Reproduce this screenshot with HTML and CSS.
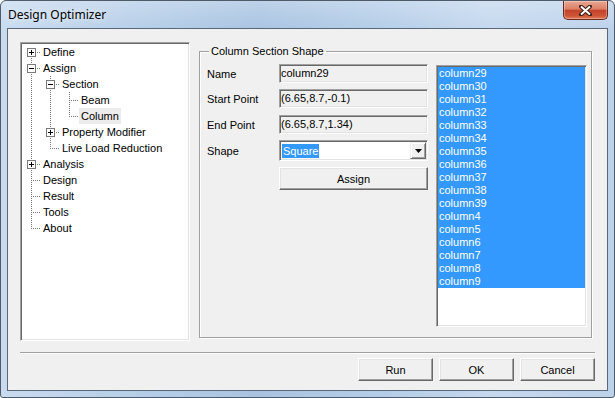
FILE: index.html
```html
<!DOCTYPE html>
<html lang="en">
  <head>
    <meta charset="UTF-8" />
    <title>Design Optimizer</title>
    <link rel="stylesheet" href="styles.css">
  </head>
  <body>
    <div class="window">
      <!-- Title bar -->
      <div class="titlebar">
        <span class="title">Design Optimizer</span>
        <button class="close" title="Close">
          <svg width="13" height="11" viewBox="0 0 13 11">
            <path d="M2 1.5l9 8M11 1.5l-9 8" stroke="#3b1f1a" stroke-width="4" stroke-linecap="round" />
            <path d="M2 1.5l9 8M11 1.5l-9 8" stroke="#fff" stroke-width="2" />
          </svg>
        </button>
      </div>

      <div class="client">
        <div class="main">
          <!-- Tree -->
          <div class="tree">
            <div class="row"><span class="g first"><i class="box plus"></i></span><span class="label">Define</span></div>
            <div class="row"><span class="g tee"><i class="box minus"></i></span><span class="label">Assign</span></div>
            <div class="row"><span class="g v"></span><span class="g tee"><i class="box minus"></i></span><span class="label">Section</span></div>
            <div class="row"><span class="g v"></span><span class="g v"></span><span class="g tee"></span><span class="label">Beam</span></div>
            <div class="row"><span class="g v"></span><span class="g v"></span><span class="g elbow"></span><span class="label sel">Column</span></div>
            <div class="row"><span class="g v"></span><span class="g tee"><i class="box plus"></i></span><span class="label">Property Modifier</span></div>
            <div class="row"><span class="g v"></span><span class="g elbow"></span><span class="label">Live Load Reduction</span></div>
            <div class="row"><span class="g tee"><i class="box plus"></i></span><span class="label">Analysis</span></div>
            <div class="row"><span class="g tee"></span><span class="label">Design</span></div>
            <div class="row"><span class="g tee"></span><span class="label">Result</span></div>
            <div class="row"><span class="g tee"></span><span class="label">Tools</span></div>
            <div class="row"><span class="g elbow"></span><span class="label">About</span></div>
          </div>

          <!-- Group box -->
          <fieldset class="group">
            <legend>Column Section Shape</legend>
            <div class="group-body">
              <div class="form">
                <div class="field-row"><label>Name</label><div class="field">column29</div></div>
                <div class="field-row r2"><label>Start Point</label><div class="field">(6.65,8.7,-0.1)</div></div>
                <div class="field-row r3"><label>End Point</label><div class="field">(6.65,8.7,1.34)</div></div>
                <div class="field-row r4">
                  <label>Shape</label>
                  <div class="combo">
                    <span class="combo-sel">Square</span>
                    <span class="drop">
                      <svg width="7" height="4" viewBox="0 0 7 4"><path d="M0 0h7L3.5 4z" fill="#000" /></svg>
                    </span>
                  </div>
                </div>
                <button class="btn assign">Assign</button>
              </div>
              <ul class="list">
                <li>column29</li>
                <li>column30</li>
                <li>column31</li>
                <li>column32</li>
                <li>column33</li>
                <li>column34</li>
                <li>column35</li>
                <li>column36</li>
                <li>column37</li>
                <li>column38</li>
                <li>column39</li>
                <li>column4</li>
                <li>column5</li>
                <li>column6</li>
                <li>column7</li>
                <li>column8</li>
                <li>column9</li>
              </ul>
            </div>
          </fieldset>
        </div>

        <div class="sep"></div>

        <div class="buttons">
          <button class="btn">Run</button>
          <button class="btn">OK</button>
          <button class="btn">Cancel</button>
        </div>
      </div>
    </div>
  </body>
</html>
```

FILE: styles.css
```css
* {
  margin: 0;
  padding: 0;
  box-sizing: border-box;
}

body {
  background: #fff;
  font-family: "Liberation Sans", Arial, sans-serif;
  font-size: 11px;
  color: #000;
}

/* Fenêtre */
.window {
  width: 615px;
  height: 398px;
  display: flex;
  flex-direction: column;
  padding: 0 6px 6px 6px;
  border: 1px solid #4f5b68;
  border-radius: 6px 6px 3px 3px;
  background:
    linear-gradient(to bottom, rgba(255, 255, 255, 0.25), rgba(255, 255, 255, 0) 30px),
    linear-gradient(to right, #c8dbf0 0%, #b6cee8 22%, #a8c3e2 42%, #b3cce7 60%, #c4d8ee 80%, #bcd2ea 100%);
}

.titlebar {
  height: 27px;
  margin: 0 -6px;
  padding: 0 6px 0 7px;
  display: flex;
  align-items: flex-start;
}

.title {
  font-family: "Noto Sans", "Open Sans", sans-serif;
  font-size: 12px;
  line-height: 27px;
  color: #000;
  text-shadow: 0 0 6px rgba(255, 255, 255, 0.9);
}

.close {
  margin-left: auto;
  width: 45px;
  height: 19px;
  border: 1px solid #6b2a20;
  border-top: none;
  border-radius: 0 0 5px 5px;
  background: linear-gradient(to bottom, #e9a892 0%, #dc7f66 45%, #c4432b 52%, #cd5337 80%, #e07a55 100%);
  box-shadow: inset 0 0 0 1px rgba(255, 255, 255, 0.3);
  display: flex;
  align-items: center;
  justify-content: center;
}

.client {
  flex: 1;
  display: flex;
  flex-direction: column;
  background: #f0f0f0;
  border: 1px solid #5a6878;
  padding: 13px 0 0 0;
}

.main {
  display: flex;
  align-items: flex-start;
  padding: 0 12px;
}

/* Arbre */
.tree {
  --vdots: repeating-linear-gradient(to bottom, #7a7a7a 0 1px, transparent 1px 2px);
  --hdots: repeating-linear-gradient(to right, #7a7a7a 0 1px, transparent 1px 2px);
  width: 170px;
  height: 299px;
  flex: none;
  background: #fff;
  border: 1px solid;
  border-color: #a0a0a0 #fff #fff #a0a0a0;
  box-shadow: inset 1px 1px #696969, inset -1px -1px #e3e3e3;
  padding: 1px 0 0 1px;
}

.row {
  display: flex;
  height: 16px;
}

.g {
  width: 19px;
  height: 16px;
  flex: none;
  background-repeat: no-repeat;
}

.g.v {
  background-image: var(--vdots);
  background-position: 9px 0;
  background-size: 1px 16px;
}

.g.tee {
  background-image: var(--vdots), var(--hdots);
  background-position: 9px 0, 9px 8px;
  background-size: 1px 16px, 10px 1px;
}

.g.elbow {
  background-image: var(--vdots), var(--hdots);
  background-position: 9px 0, 9px 8px;
  background-size: 1px 9px, 10px 1px;
}

.g.first {
  background-image: var(--vdots), var(--hdots);
  background-position: 9px 8px, 9px 8px;
  background-size: 1px 8px, 10px 1px;
}

.box {
  display: block;
  width: 9px;
  height: 9px;
  margin: 4px 0 0 5px;
  border: 1px solid #7a7a7a;
  background-color: #fff;
  background-repeat: no-repeat;
}

.box.minus {
  background-image: linear-gradient(#000, #000);
  background-position: 1px 3px;
  background-size: 5px 1px;
}

.box.plus {
  background-image: linear-gradient(#000, #000), linear-gradient(#000, #000);
  background-position: 1px 3px, 3px 1px;
  background-size: 5px 1px, 1px 5px;
}

.label {
  padding: 0 2px;
  line-height: 16px;
  white-space: nowrap;
}

.label.sel {
  background: #ececec;
}

/* Cadre */
.group {
  flex: none;
  width: 393px;
  height: 293px;
  margin: 3px 0 0 9px;
  padding: 0 4px 0 7px;
  border: 1px solid #a0a0a0;
  box-shadow: inset 1px 1px #fff, 1px 1px #fff;
}

.group legend {
  margin-left: 2px;
  padding: 0 2px;
  line-height: 13px;
}

.group-body {
  display: flex;
  gap: 8px;
  padding-top: 6px;
}

.form {
  width: 221px;
  display: flex;
  flex-direction: column;
  align-items: flex-end;
}

.field-row {
  width: 100%;
  display: flex;
  align-items: center;
}

.field-row label {
  width: 72px;
}

.r2 {
  margin-top: 6px;
}

.r3 {
  margin-top: 7px;
}

.r4 {
  margin-top: 6px;
}

.field {
  width: 149px;
  height: 19px;
  line-height: 17px;
  background: #f0f0f0;
  border: 1px solid;
  border-color: #a0a0a0 #fff #fff #a0a0a0;
  box-shadow: inset 1px 1px #696969, inset -1px -1px #e3e3e3;
  padding-left: 1px;
}

.combo {
  width: 149px;
  height: 21px;
  display: flex;
  align-items: center;
  background: #fff;
  border: 1px solid;
  border-color: #a0a0a0 #fff #fff #a0a0a0;
  box-shadow: inset 1px 1px #696969, inset -1px -1px #e3e3e3;
  padding: 1px;
}

.combo-sel {
  margin-left: 1px;
  padding: 0 1px;
  line-height: 14px;
  background: #3399ff;
  color: #fff;
}

.drop {
  margin-left: auto;
  width: 16px;
  height: 17px;
  display: flex;
  align-items: center;
  justify-content: center;
  background: #f0f0f0;
  border: 1px solid;
  border-color: #f0f0f0 #696969 #696969 #f0f0f0;
  box-shadow: inset 1px 1px #fff, inset -1px -1px #a0a0a0;
}

.btn {
  width: 75px;
  height: 23px;
  font-family: inherit;
  font-size: 11px;
  color: #000;
  background: #f0f0f0;
  border: 1px solid;
  border-color: #fff #696969 #696969 #fff;
  box-shadow: inset -1px -1px #a0a0a0, inset 1px 1px #e3e3e3;
}

.assign {
  width: 149px;
  margin-top: 6px;
}

.list {
  list-style: none;
  width: 151px;
  height: 262px;
  margin-top: 1px;
  background: #fff;
  border: 1px solid;
  border-color: #a0a0a0 #fff #fff #a0a0a0;
  box-shadow: inset 1px 1px #696969, inset -1px -1px #e3e3e3;
  padding: 1px;
}

.list li {
  height: 13px;
  line-height: 13px;
  padding-left: 1px;
  background: #3399ff;
  color: #fff;
}

.sep {
  margin: 11px 12px 0 12px;
  border-top: 1px solid #a0a0a0;
  border-bottom: 1px solid #fff;
}

.buttons {
  display: flex;
  justify-content: flex-end;
  gap: 6px;
  margin-top: 4px;
  padding-right: 12px;
}
```
